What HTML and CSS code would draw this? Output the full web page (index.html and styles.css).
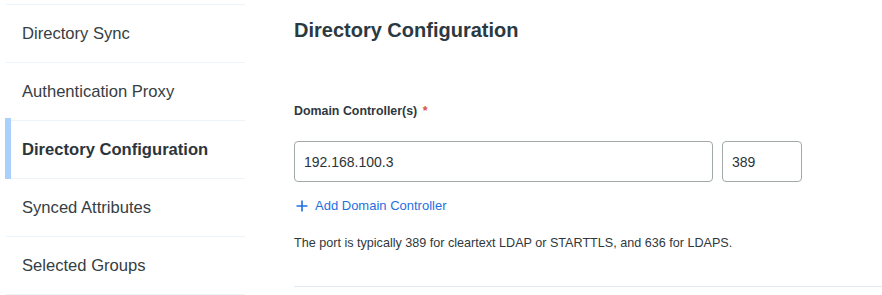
FILE: index.html
```html
<!DOCTYPE html>
<html lang="en">
<head>
<meta charset="utf-8">
<title>Directory Configuration</title>
<link rel="stylesheet" href="styles.css">
</head>
<body>
<div class="page">
  <nav class="sidebar">
    <div class="nav-item">Directory Sync</div>
    <div class="nav-item">Authentication Proxy</div>
    <div class="nav-item active">Directory Configuration</div>
    <div class="nav-item">Synced Attributes</div>
    <div class="nav-item">Selected Groups</div>
  </nav>
  <main class="main">
    <h1 class="title">Directory Configuration</h1>
    <div class="field">
      <label class="label">Domain Controller(s) <span class="req">*</span></label>
      <div class="inputs">
        <div class="input host">192.168.100.3</div>
        <div class="input port">389</div>
      </div>
      <a class="add-link" href="#"><svg class="plus" width="12" height="12" viewBox="0 0 12 12"><path d="M6 0.5v11M0.5 6h11" stroke="currentColor" stroke-width="1.6" fill="none"/></svg>Add Domain Controller</a>
      <p class="help">The port is typically 389 for cleartext LDAP or STARTTLS, and 636 for LDAPS.</p>
    </div>
    <div class="divider"></div>
  </main>
</div>
</body>
</html>
```
FILE: styles.css
```css
* { box-sizing: border-box; }
html, body { margin: 0; padding: 0; background: #ffffff; }
body {
  font-family: "Liberation Sans", Arial, sans-serif;
  color: #2f3a40;
  overflow: hidden;
}
.page {
  display: flex;
  align-items: flex-start;
  width: 882px;
  height: 295px;
}
.sidebar {
  margin-left: 6px;
  margin-top: 4px;
  width: 239px;
  flex: none;
  border-top: 1px solid #ebf3fb;
}
.nav-item {
  position: relative;
  height: 58px;
  display: flex;
  align-items: center;
  padding-left: 16px;
  font-size: 16.6px;
  color: #363e44;
  border-bottom: 1px solid #ebf3fb;
}
.nav-item.active {
  font-weight: bold;
  color: #2b353b;
}
.nav-item.active::before {
  content: "";
  position: absolute;
  left: -1px;
  top: -3px;
  bottom: -1px;
  width: 6px;
  background: #a9d1fb;
}
.main {
  margin-left: 49px;
  flex: 1;
  padding-top: 18px;
}
.title {
  margin: 0;
  font-size: 20px;
  line-height: 24px;
  font-weight: bold;
  color: #2b3a42;
}
.field {
  margin-top: 61px;
}
.label {
  display: block;
  font-size: 12.4px;
  line-height: 16px;
  font-weight: bold;
  color: #2f383e;
}
.req { color: #d9534f; margin-left: 2px; }
.inputs {
  display: flex;
  gap: 9px;
  margin-top: 22px;
}
.input {
  height: 41px;
  border: 1px solid #a3a8ab;
  border-radius: 4px;
  display: flex;
  align-items: center;
  padding-left: 9px;
  font-size: 14px;
  color: #2c3338;
}
.host { width: 419px; }
.port { width: 80px; }
.add-link {
  display: inline-flex;
  align-items: center;
  gap: 7px;
  margin-top: 16px;
  margin-left: 2px;
  font-size: 13px;
  line-height: 16px;
  color: #1f6fe0;
  text-decoration: none;
}
.plus { flex: none; }
.help {
  margin: 19px 0 0 0;
  font-size: 12.6px;
  line-height: 16px;
  color: #30383d;
}
.divider {
  margin-top: 35px;
  height: 1px;
  background: #e3eaef;
}
```
